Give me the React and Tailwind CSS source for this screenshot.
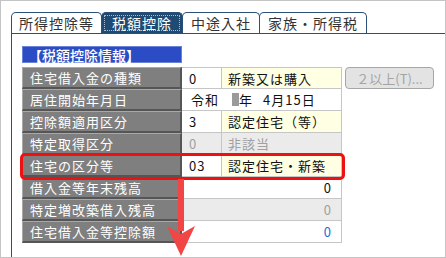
import React from "react";

const tabs = [
  { label: "所得控除等", w: "w-[91px]" },
  { label: "税額控除", w: "w-[82px]", active: true },
  { label: "中途入社", w: "w-[78px]" },
  { label: "家族・所得税", w: "w-[108px]" },
];

// label cell with the old windows bevel
const Label = ({ children }) => (
  <div className="w-[160px] h-full flex items-center pl-[7px] bg-[#7f7f7f] text-white border-t border-l border-t-[#a8a8a8] border-l-[#a8a8a8] border-b-2 border-r-2 border-b-[#555] border-r-[#555]">
    {children}
  </div>
);

const Row = ({ label, children, extra }) => (
  <div className="flex h-[22px]">
    <Label>{label}</Label>
    <div className="flex w-[160px] h-full border-b border-r border-[#c6c6c6]">{children}</div>
    {extra}
  </div>
);

const Code = ({ v, muted }) => (
  <div
    className={`w-[40px] h-full flex items-center pl-[7px] border-r border-[#c6c6c6] ${
      muted ? "bg-[#ebebeb] text-[#a0a0a0]" : "bg-white text-[#111]"
    }`}
  >
    {v}
  </div>
);

const Text = ({ v, muted }) => (
  <div
    className={`flex-1 h-full flex items-center pl-[6px] ${
      muted ? "bg-[#ebebeb] text-[#a0a0a0]" : "bg-[#ffffe3] text-[#111]"
    }`}
  >
    {v}
  </div>
);

const Amount = ({ v, cls }) => (
  <div className={`flex-1 h-full flex items-center justify-end pr-[9px] ${cls}`}>{v}</div>
);

export default function App() {
  return (
    <div className="w-[446px] h-[258px] overflow-hidden bg-white border border-[#c4c4c4] pl-[10px] pt-[11px] flex flex-col font-['Noto_Sans_CJK_JP','Liberation_Sans',sans-serif] text-[13px] tracking-[1px] leading-none">
      {/* tabs */}
      <div className="flex h-[21px] items-end">
        {tabs.map((t, i) => (
          <div
            key={t.label}
            className={`${t.w} h-[21px] ${i > 0 ? "-ml-px" : ""} rounded-t-[5px] border border-b-0 border-[#2b5078] flex items-center justify-center text-[14px] ${
              t.active ? "bg-[#1e4a74] text-white p-[2px]" : "bg-white text-[#333]"
            }`}
          >
            {t.active ? (
              <span className="w-full h-full flex items-center justify-center border border-dotted border-[#a9bdd2]">
                {t.label}
              </span>
            ) : (
              t.label
            )}
          </div>
        ))}
      </div>

      {/* panel */}
      <div className="flex-1 border-t border-l border-[#2b5078] pl-[10px] pt-[12px]">
        <div className="relative w-fit">
          <div className="w-[160px] h-[17px] bg-[#2b4cc4] border border-[#6b83d6] text-white flex items-center pl-[5px] text-[14px] font-medium tracking-normal">
            【税額控除情報】
          </div>

          <div className="mt-[4px] flex flex-col">
            <div className="flex h-[22px]">
              <Label>住宅借入金の種類</Label>
              <div className="flex w-[160px] h-full border-t border-b border-r border-[#c6c6c6]">
                <Code v="0" />
                <Text v="新築又は購入" />
              </div>
              <button className="ml-[3px] w-[89px] h-[22px] rounded-[4px] border border-[#a6a6a6] bg-[#e3e3e3] text-[#a4a4a4] flex items-center justify-center tracking-normal">
                ２以上(T)...
              </button>
            </div>
            <Row label="居住開始年月日">
              <div className="flex-1 h-full flex items-center pl-[9px] bg-white text-[#111]">
                令和<span className="ml-[13px] inline-block w-[7px] h-[13px] bg-[#9a9a9a]" />年<span className="ml-[10px]">4月15日</span>
              </div>
            </Row>
            <Row label="控除額適用区分">
              <Code v="3" />
              <Text v="認定住宅（等）" />
            </Row>
            <Row label="特定取得区分">
              <Code v="0" muted />
              <Text v="非該当" muted />
            </Row>
            <Row label="住宅の区分等">
              <Code v="03" />
              <Text v="認定住宅・新築" />
            </Row>
            <Row label="借入金等年末残高">
              <Amount v="0" cls="bg-white text-[#111]" />
            </Row>
            <Row label="特定増改築借入残高">
              <Amount v="0" cls="bg-[#ebebeb] text-[#a0a0a0]" />
            </Row>
            <Row label="住宅借入金等控除額">
              <Amount v="0" cls="bg-white text-[#1a6fd8]" />
            </Row>
          </div>

          {/* annotation: red box + arrow */}
          <div className="absolute left-[-2px] top-[107px] w-[325px] h-[27px] border-[3px] border-[#ee1111] rounded-[5px] pointer-events-none" />
          <svg className="absolute left-[144px] top-[133px]" width="30" height="80" viewBox="0 0 30 80">
            <rect x="12" y="0" width="6" height="52" fill="#f24545" />
            <path d="M1 47 L15 55 L29 47 L15 77 Z" fill="#f24545" />
          </svg>
        </div>
      </div>
    </div>
  );
}
